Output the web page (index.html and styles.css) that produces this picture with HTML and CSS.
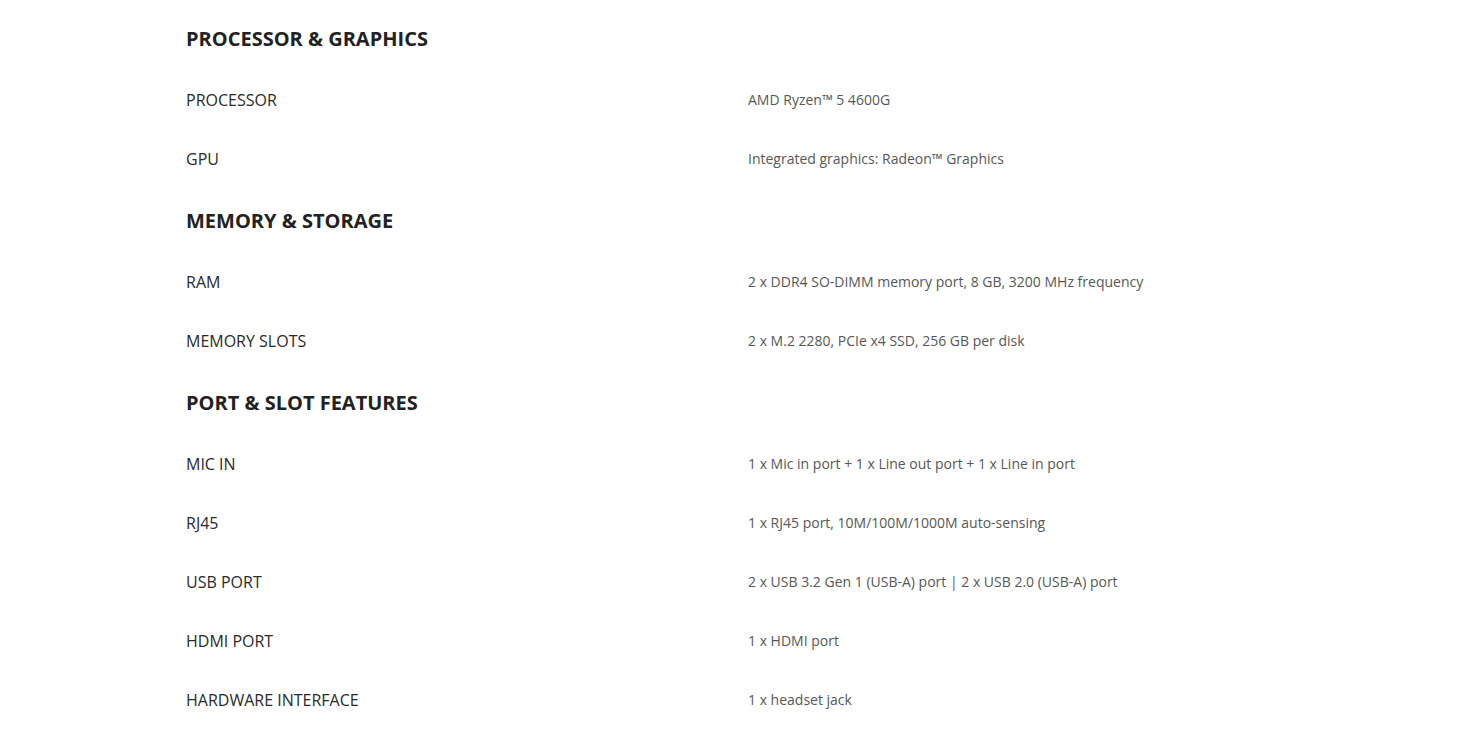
FILE: index.html
```html
<!DOCTYPE html>
<html lang="en">
<head>
<meta charset="utf-8">
<title>Specs</title>
<link rel="stylesheet" href="styles.css">
</head>
<body>
<main class="specs">
  <section class="group">
    <h2 class="group-title">PROCESSOR &amp; GRAPHICS</h2>
    <div class="row"><div class="label">PROCESSOR</div><div class="value">AMD Ryzen™ 5 4600G</div></div>
    <div class="row"><div class="label">GPU</div><div class="value">Integrated graphics: Radeon™ Graphics</div></div>
  </section>
  <section class="group">
    <h2 class="group-title">MEMORY &amp; STORAGE</h2>
    <div class="row"><div class="label">RAM</div><div class="value">2 x DDR4 SO-DIMM memory port, 8 GB, 3200 MHz frequency</div></div>
    <div class="row"><div class="label">MEMORY SLOTS</div><div class="value">2 x M.2 2280, PCIe x4 SSD, 256 GB per disk</div></div>
  </section>
  <section class="group">
    <h2 class="group-title">PORT &amp; SLOT FEATURES</h2>
    <div class="row"><div class="label">MIC IN</div><div class="value">1 x Mic in port + 1 x Line out port + 1 x Line in port</div></div>
    <div class="row"><div class="label">RJ45</div><div class="value">1 x RJ45 port, 10M/100M/1000M auto-sensing</div></div>
    <div class="row"><div class="label">USB PORT</div><div class="value">2 x USB 3.2 Gen 1 (USB-A) port | 2 x USB 2.0 (USB-A) port</div></div>
    <div class="row"><div class="label">HDMI PORT</div><div class="value">1 x HDMI port</div></div>
    <div class="row"><div class="label">HARDWARE INTERFACE</div><div class="value">1 x headset jack</div></div>
  </section>
</main>
</body>
</html>
```
FILE: styles.css
```css
html, body {
  margin: 0;
  padding: 0;
  background: #fff;
}
body {
  font-family: "Open Sans", "Noto Sans", sans-serif;
}
.specs {
  width: 1090px;
  margin: 0 0 0 186px;
  padding-top: 6px;
}
.group-title {
  margin: 0;
  height: 64px;
  display: flex;
  align-items: center;
  font-size: 20px;
  font-weight: 700;
  color: #222;
}
.row {
  display: grid;
  grid-template-columns: 562px 1fr;
  align-items: center;
  height: 59px;
}
.label {
  font-size: 16px;
  color: #2a2a2a;
}
.value {
  font-size: 14px;
  color: #575757;
}
```
